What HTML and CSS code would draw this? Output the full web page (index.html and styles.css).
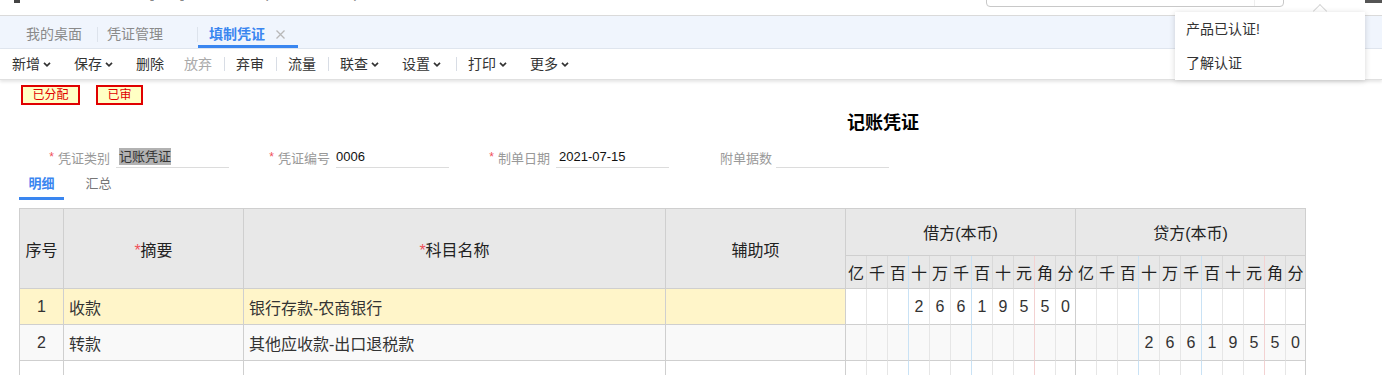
FILE: index.html
```html
<!DOCTYPE html>
<html lang="zh-CN">
<head>
<meta charset="utf-8">
<title>填制凭证</title>
<link rel="stylesheet" href="styles.css">
</head>
<body>
<div class="topbar">
  <div class="brand"><span class="logo"></span><span class="brand-text">云帐房财务 - [001]测试公司 - (2021年07月)</span></div>
  <div class="search"><span class="search-btn"></span></div>
  <div class="topicon"></div>
</div>

<div class="tabbar">
  <div class="tab first">我的桌面</div>
  <span class="tsep"></span>
  <div class="tab second">凭证管理</div>
  <span class="tsep"></span>
  <div class="tab active">填制凭证<svg class="close" width="9" height="9" viewBox="0 0 9 9"><path d="M0.5 0.5L8.5 8.5M8.5 0.5L0.5 8.5" stroke="#b8b8b8" stroke-width="1.3"/></svg></div>
</div>

<div class="toolbar">
  <span class="tb dd">新增<svg class="chev" width="8" height="5" viewBox="0 0 8 5"><path d="M1 0.8L4 3.8L7 0.8" fill="none" stroke="#333" stroke-width="1.7"/></svg></span>
  <span class="tb dd">保存<svg class="chev" width="8" height="5" viewBox="0 0 8 5"><path d="M1 0.8L4 3.8L7 0.8" fill="none" stroke="#333" stroke-width="1.7"/></svg></span>
  <span class="tb">删除</span>
  <span class="tb disabled">放弃</span>
  <span class="tbsep"></span>
  <span class="tb">弃审</span>
  <span class="tbsep"></span>
  <span class="tb">流量</span>
  <span class="tbsep"></span>
  <span class="tb dd">联查<svg class="chev" width="8" height="5" viewBox="0 0 8 5"><path d="M1 0.8L4 3.8L7 0.8" fill="none" stroke="#333" stroke-width="1.7"/></svg></span>
  <span class="tb dd">设置<svg class="chev" width="8" height="5" viewBox="0 0 8 5"><path d="M1 0.8L4 3.8L7 0.8" fill="none" stroke="#333" stroke-width="1.7"/></svg></span>
  <span class="tbsep"></span>
  <span class="tb dd">打印<svg class="chev" width="8" height="5" viewBox="0 0 8 5"><path d="M1 0.8L4 3.8L7 0.8" fill="none" stroke="#333" stroke-width="1.7"/></svg></span>
  <span class="tb dd">更多<svg class="chev" width="8" height="5" viewBox="0 0 8 5"><path d="M1 0.8L4 3.8L7 0.8" fill="none" stroke="#333" stroke-width="1.7"/></svg></span>
</div>

<div class="badges">
  <span class="badge">已分配</span>
  <span class="badge">已审</span>
</div>

<div class="title-row"><h1 class="title">记账凭证</h1></div>

<div class="form-row">
  <div class="fitem"><label class="flabel"><span class="req">*</span>凭证类别</label><div class="finput"><span class="selected">记账凭证</span></div></div>
  <div class="fitem"><label class="flabel"><span class="req">*</span>凭证编号</label><div class="finput num">0006</div></div>
  <div class="fitem"><label class="flabel"><span class="req">*</span>制单日期</label><div class="finput">2021-07-15</div></div>
  <div class="fitem"><label class="flabel last">附单据数</label><div class="finput"></div></div>
</div>

<div class="subtabs">
  <span class="stab active">明细</span>
  <span class="stab">汇总</span>
</div>

<table class="vt">
  <colgroup>
    <col class="c-no"><col class="c-sum"><col class="c-acc"><col class="c-aux">
    <col class="c-d"><col class="c-d"><col class="c-d"><col class="c-d"><col class="c-d"><col class="c-d"><col class="c-d"><col class="c-d"><col class="c-d"><col class="c-d"><col class="c-dl">
    <col class="c-d"><col class="c-d"><col class="c-d"><col class="c-d"><col class="c-d"><col class="c-d"><col class="c-d"><col class="c-d"><col class="c-d"><col class="c-d"><col class="c-dl">
  </colgroup>
  <thead>
    <tr class="h1">
      <th rowspan="2">序号</th>
      <th rowspan="2"><span class="req">*</span>摘要</th>
      <th rowspan="2"><span class="req">*</span>科目名称</th>
      <th rowspan="2">辅助项</th>
      <th colspan="11" class="grp">借方(本币)</th>
      <th colspan="11" class="grp">贷方(本币)</th>
    </tr>
    <tr class="h2">
      <th class="d">亿</th><th class="d">千</th><th class="d b">百</th><th class="d">十</th><th class="d">万</th><th class="d b">千</th><th class="d">百</th><th class="d">十</th><th class="d r">元</th><th class="d">角</th><th class="d e">分</th>
      <th class="d">亿</th><th class="d">千</th><th class="d b">百</th><th class="d">十</th><th class="d">万</th><th class="d b">千</th><th class="d">百</th><th class="d">十</th><th class="d r">元</th><th class="d">角</th><th class="d e">分</th>
    </tr>
  </thead>
  <tbody>
    <tr class="row cur">
      <td class="no">1</td><td class="txt">收款</td><td class="txt">银行存款-农商银行</td><td class="txt"></td>
      <td class="d"></td><td class="d"></td><td class="d b"></td><td class="d">2</td><td class="d">6</td><td class="d b">6</td><td class="d">1</td><td class="d">9</td><td class="d r">5</td><td class="d">5</td><td class="d e">0</td>
      <td class="d"></td><td class="d"></td><td class="d b"></td><td class="d"></td><td class="d"></td><td class="d b"></td><td class="d"></td><td class="d"></td><td class="d r"></td><td class="d"></td><td class="d e"></td>
    </tr>
    <tr class="row alt">
      <td class="no">2</td><td class="txt">转款</td><td class="txt">其他应收款-出口退税款</td><td class="txt"></td>
      <td class="d"></td><td class="d"></td><td class="d b"></td><td class="d"></td><td class="d"></td><td class="d b"></td><td class="d"></td><td class="d"></td><td class="d r"></td><td class="d"></td><td class="d e"></td>
      <td class="d"></td><td class="d"></td><td class="d b"></td><td class="d">2</td><td class="d">6</td><td class="d b">6</td><td class="d">1</td><td class="d">9</td><td class="d r">5</td><td class="d">5</td><td class="d e">0</td>
    </tr>
    <tr class="row">
      <td class="no faint">3</td><td class="txt"></td><td class="txt"></td><td class="txt"></td>
      <td class="d"></td><td class="d"></td><td class="d b"></td><td class="d"></td><td class="d"></td><td class="d b"></td><td class="d"></td><td class="d"></td><td class="d r"></td><td class="d"></td><td class="d e"></td>
      <td class="d"></td><td class="d"></td><td class="d b"></td><td class="d"></td><td class="d"></td><td class="d b"></td><td class="d"></td><td class="d"></td><td class="d r"></td><td class="d"></td><td class="d e"></td>
    </tr>
  </tbody>
</table>

<div class="popup">
  <span class="caret"></span>
  <div class="pop-body">
    <div class="pop-item">产品已认证!</div>
    <div class="pop-item">了解认证</div>
  </div>
</div>
</body>
</html>
```
FILE: styles.css
```css
* { box-sizing: border-box; margin: 0; padding: 0; }
html, body { width: 1382px; height: 375px; overflow: hidden; }
body {
  margin: 0;
  background: #fff;
  font-family: "Liberation Sans", "Noto Sans CJK SC", sans-serif;
  color: #333;
  position: relative;
}

/* top header (mostly scrolled out of view) */
.topbar {
  height: 16px;
  border-bottom: 1px solid #dadada;
  display: flex;
  overflow: hidden;
}
.brand {
  display: flex;
  align-items: flex-start;
  margin-top: -17px;
  padding-left: 14px;
  font-size: 16px;
  line-height: 20px;
  color: #888;
}
.logo { width: 6px; height: 20px; background: #444; margin-right: 35px; }
.search {
  margin-left: auto;
  margin-top: -16px;
  width: 298px;
  height: 23px;
  border: 1px solid #c8c8c8;
  border-radius: 4px;
  display: flex;
  justify-content: flex-end;
}
.search-btn { width: 29px; border-left: 1px solid #eee; }
.topicon { width: 17px; height: 3px; background: #555; margin-left: 81px; }

/* tab bar */
.tabbar {
  height: 33px;
  background: #f0f5fd;
  border-bottom: 1px solid #e0e6ef;
  display: flex;
  padding-left: 26px;
}
.tab {
  height: 32px;
  padding-top: 8px;
  line-height: 20px;
  font-size: 14px;
  color: #8a8a8a;
  border-bottom: 3px solid transparent;
  display: flex;
  align-items: flex-start;
}
.tab.first { padding-right: 15px; }
.tab.second { margin-left: 9px; padding-right: 34px; }
.tab.active {
  color: #3a86f0;
  font-weight: bold;
  padding-left: 11px;
  padding-right: 13px;
  border-bottom-color: #3a86f0;
}
.close { margin-left: 11px; margin-top: 6px; }
.tsep { width: 1px; height: 15px; background: #dde3ec; margin-top: 11px; }

/* toolbar */
.toolbar {
  height: 31px;
  display: flex;
  align-items: center;
  padding-left: 12px;
  font-size: 14px;
  color: #333;
  border-bottom: 1px solid #e0e0e0;
  box-shadow: 0 2px 3px rgba(0, 0, 0, 0.10);
  position: relative;
}
.tb { display: flex; align-items: center; margin-right: 20px; line-height: 20px; }
.tb.disabled { color: #aaa; }
.chev { margin-left: 3px; margin-right: 3px; margin-top: 1px; }
.tbsep { width: 1px; height: 14px; background: #d8dde5; margin-left: -8px; margin-right: 11px; }

/* status badges */
.badges { display: flex; gap: 16px; padding: 5px 0 0 21px; }
.badge {
  height: 20px;
  padding: 0 9.5px;
  border: 2px solid #e00000;
  background: #ffffc4;
  color: #e00000;
  font-size: 12px;
  line-height: 16px;
}

/* title */
.title-row { display: flex; justify-content: center; padding-left: 384px; margin-top: 6px; }
.title { font-size: 18px; line-height: 25px; font-weight: bold; color: #000; }

/* header form */
.form-row {
  display: grid;
  grid-template-columns: repeat(4, 220px);
  padding-left: 9px;
  margin-top: 10px;
  height: 22px;
}
.fitem { display: flex; height: 22px; }
.flabel {
  width: 107px;
  padding-right: 6px;
  display: flex;
  justify-content: flex-end;
  align-items: center;
  font-size: 13px;
  color: #999;
}
.flabel.last { padding-right: 4px; }
.req { color: #f0505a; font-family: "Liberation Sans", sans-serif; }
.flabel .req { font-size: 12px; margin-right: 4px; }
.finput {
  width: 113px;
  height: 22px;
  border-bottom: 1px solid #dcdcdc;
  font-size: 13px;
  color: #111;
  padding-left: 3px;
  display: flex;
  align-items: center;
}
.finput.num { padding-left: 0; }
.selected { background: #b2b2b2; color: #333; line-height: 17px; }

/* sub tabs */
.subtabs { display: flex; padding-left: 19px; }
.stab {
  width: 45px;
  text-align: center;
  padding-top: 6px;
  line-height: 20px;
  padding-bottom: 3px;
  border-bottom: 3px solid transparent;
  font-size: 13px;
  color: #777;
}
.stab + .stab { margin-left: 12px; }
.stab.active { color: #3a86f0; font-weight: bold; border-bottom-color: #3a86f0; }

/* voucher table */
.vt {
  margin-top: 8px;
  margin-left: 19px;
  width: 1287px;
  table-layout: fixed;
  border-collapse: separate;
  border-spacing: 0;
  border-top: 1px solid #cfcfcf;
  border-left: 1px solid #cfcfcf;
  font-size: 16px;
  color: #333;
}
.c-no { width: 44px; }
.c-sum { width: 180px; }
.c-acc { width: 422px; }
.c-aux { width: 180px; }
.c-d { width: 21px; }
.c-dl { width: 20px; }
.vt th, .vt td {
  border-right: 1px solid #cfcfcf;
  border-bottom: 1px solid #cfcfcf;
  padding: 0;
  overflow: hidden;
  white-space: nowrap;
}
.vt th { background: #e8e8e8; font-weight: normal; color: #222; text-align: center; vertical-align: middle; }
.vt .h1 { height: 47px; }
.vt .h2 { height: 33px; }
.vt .row { height: 36px; }
.vt .d { text-align: center; border-right-color: #e6e6e6; }
.vt th.d { border-right-color: #d9d9d9; }
.vt .d.b { border-right-color: #c9e2f5; }
.vt .d.r { border-right-color: #f3d2d2; }
.vt .d.e { border-right-color: #cfcfcf; }
.vt td.no { text-align: center; }
.vt td.txt { padding-left: 5px; }
.vt .cur td { background: #fff5c9; }
.vt .cur td.d { background: #fff; }
.vt .alt td { background: #f9f9f9; }
.faint { color: #ccc; vertical-align: bottom; }

/* notification popup */
.popup { position: absolute; left: 1175px; top: 4px; width: 190px; }
.caret {
  position: absolute;
  left: 140px;
  top: 2px;
  width: 10px;
  height: 10px;
  background: #fff;
  border-top: 1px solid #d6d6d6;
  border-left: 1px solid #d6d6d6;
  transform: rotate(45deg);
}
.pop-body {
  position: relative;
  margin-top: 8px;
  background: #fff;
  box-shadow: 0 1px 6px rgba(0, 0, 0, 0.16);
}
.pop-item { height: 34px; line-height: 34px; padding-left: 11px; font-size: 14px; color: #333; }
```
